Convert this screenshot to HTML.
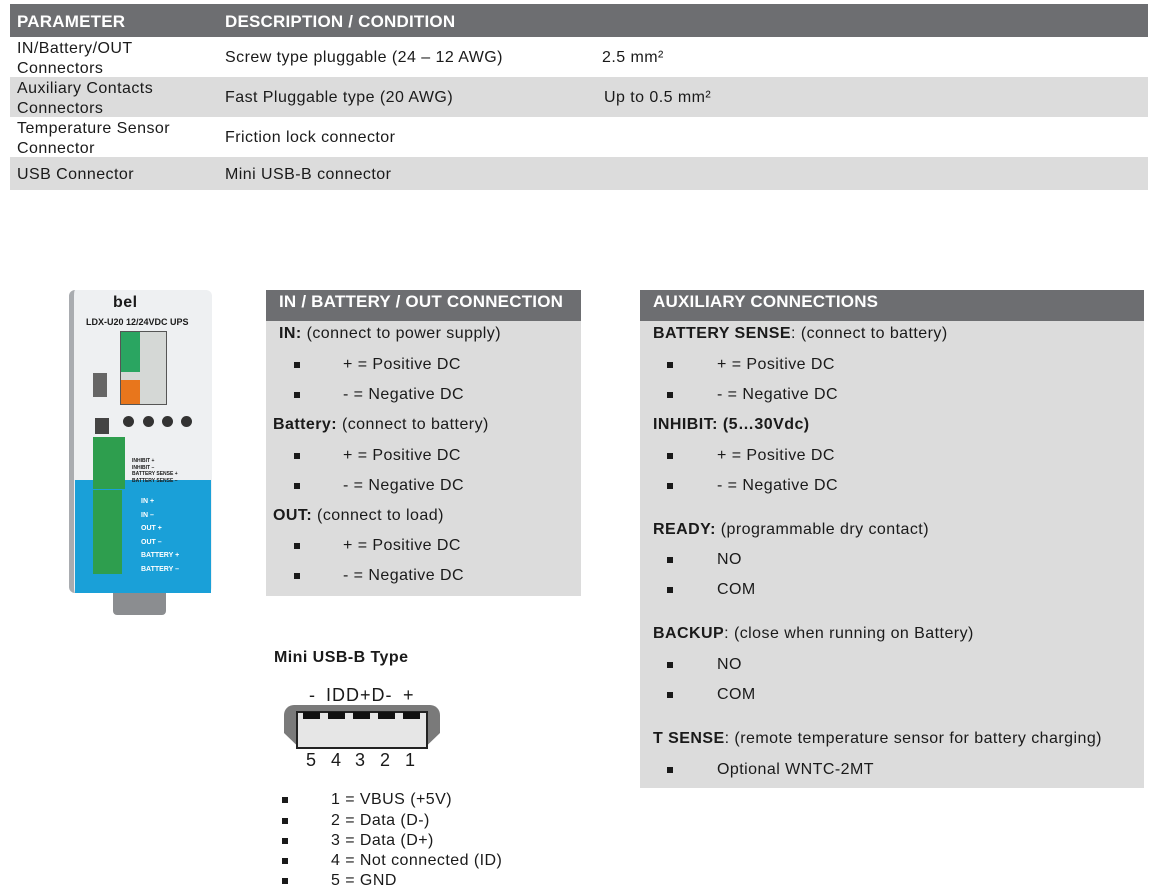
<!DOCTYPE html>
<html><head><meta charset="utf-8"><style>
*{margin:0;padding:0;box-sizing:border-box}
body{width:1153px;height:895px;background:#fff;font-family:"Liberation Sans",Arial,sans-serif;color:#1a1a1a;position:relative;overflow:hidden;font-size:16px;letter-spacing:0.45px}
.a{position:absolute;white-space:nowrap}
.hd{background:#6d6e71;color:#fff;font-weight:bold;font-size:16px}
.h{color:#fff;font-weight:bold;font-size:17px;letter-spacing:0.2px}
.g{background:#dcdcdc}
.b{position:absolute;width:6px;height:6px;background:#1a1a1a}
.d{font-size:18px;letter-spacing:0}
</style></head><body>
<!-- table -->
<div class="a hd" style="left:10px;top:4px;width:1138px;height:33px"></div>
<div class="a h" style="left:17px;top:12px">PARAMETER</div>
<div class="a h" style="left:225px;top:12px">DESCRIPTION / CONDITION</div>
<div class="a g" style="left:10px;top:77px;width:1138px;height:40px"></div>
<div class="a g" style="left:10px;top:157px;width:1138px;height:33px"></div>
<div class="a" style="left:17px;top:39px;line-height:20px">IN/Battery/OUT<br>Connectors</div>
<div class="a" style="left:225px;top:49px">Screw type pluggable (24 – 12 AWG)</div>
<div class="a" style="left:602px;top:49px">2.5 mm²</div>
<div class="a" style="left:17px;top:79px;line-height:20px">Auxiliary Contacts<br>Connectors</div>
<div class="a" style="left:225px;top:89px">Fast Pluggable type (20 AWG)</div>
<div class="a" style="left:604px;top:89px">Up to 0.5 mm²</div>
<div class="a" style="left:17px;top:119px;line-height:20px">Temperature Sensor<br>Connector</div>
<div class="a" style="left:225px;top:129px">Friction lock connector</div>
<div class="a" style="left:17px;top:166px">USB Connector</div>
<div class="a" style="left:225px;top:166px">Mini USB-B connector</div>

<!-- device -->
<div class="a" style="left:69px;top:290px;width:143px;height:303px;background:#eef0f2;border-radius:6px;border-left:5px solid #a9acb0"></div>
<div class="a" style="left:75px;top:480px;width:136px;height:113px;background:#1aa0d8"></div>
<div class="a" style="left:113px;top:294px;font-weight:bold;font-size:16px">bel</div>
<div class="a" style="left:86px;top:317px;font-weight:bold;font-size:9px;letter-spacing:0">LDX-U20 12/24VDC UPS</div>
<div class="a" style="left:120px;top:331px;width:47px;height:74px;background:#d5d8d6;border:1px solid #555"></div>
<div class="a" style="left:121px;top:332px;width:19px;height:40px;background:#2aa561"></div>
<div class="a" style="left:121px;top:380px;width:19px;height:24px;background:#e8761c"></div>
<div class="a" style="left:93px;top:373px;width:14px;height:24px;background:#666"></div>
<div class="a" style="left:95px;top:418px;width:14px;height:16px;background:#444"></div>
<div class="a" style="left:123px;top:416px;width:11px;height:11px;border-radius:50%;background:#333"></div>
<div class="a" style="left:143px;top:416px;width:11px;height:11px;border-radius:50%;background:#333"></div>
<div class="a" style="left:162px;top:416px;width:11px;height:11px;border-radius:50%;background:#333"></div>
<div class="a" style="left:181px;top:416px;width:11px;height:11px;border-radius:50%;background:#333"></div>
<div class="a" style="left:93px;top:437px;width:32px;height:52px;background:#2e9e4e"></div>
<div class="a" style="left:93px;top:490px;width:29px;height:84px;background:#2e9e4e"></div>
<div class="a" style="left:141px;top:495px;color:#fff;font-size:7px;font-weight:bold;line-height:13.5px;letter-spacing:0">IN +<br>IN –<br>OUT +<br>OUT –<br>BATTERY +<br>BATTERY –</div>
<div class="a" style="left:132px;top:458px;font-size:5px;font-weight:bold;line-height:6.5px;letter-spacing:0">INHIBIT +<br>INHIBIT –<br>BATTERY SENSE +<br>BATTERY SENSE –</div>
<div class="a" style="left:113px;top:593px;width:53px;height:22px;background:#8b8d90;border-radius:0 0 4px 4px"></div>

<!-- left panel -->
<div class="a g" style="left:266px;top:290px;width:315px;height:306px"></div>
<div class="a hd" style="left:266px;top:290px;width:315px;height:31px"></div>
<div class="a h" style="left:279px;top:292px">IN / BATTERY / OUT CONNECTION</div>
<div class="a" style="left:279px;top:325px"><b>IN:</b> (connect to power supply)</div>
<div class="b" style="left:294px;top:362px"></div><div class="a" style="left:343px;top:356px">+ = Positive DC</div>
<div class="b" style="left:294px;top:392px"></div><div class="a" style="left:343px;top:386px">- = Negative DC</div>
<div class="a" style="left:273px;top:416px"><b>Battery:</b> (connect to battery)</div>
<div class="b" style="left:294px;top:453px"></div><div class="a" style="left:343px;top:447px">+ = Positive DC</div>
<div class="b" style="left:294px;top:483px"></div><div class="a" style="left:343px;top:477px">- = Negative DC</div>
<div class="a" style="left:273px;top:507px"><b>OUT:</b> (connect to load)</div>
<div class="b" style="left:294px;top:543px"></div><div class="a" style="left:343px;top:537px">+ = Positive DC</div>
<div class="b" style="left:294px;top:573px"></div><div class="a" style="left:343px;top:567px">- = Negative DC</div>

<!-- right panel -->
<div class="a g" style="left:640px;top:290px;width:504px;height:498px"></div>
<div class="a hd" style="left:640px;top:290px;width:504px;height:31px"></div>
<div class="a h" style="left:653px;top:292px">AUXILIARY CONNECTIONS</div>
<div class="a" style="left:653px;top:325px"><b>BATTERY SENSE</b>: (connect to battery)</div>
<div class="b" style="left:667px;top:362px"></div><div class="a" style="left:717px;top:356px">+ = Positive DC</div>
<div class="b" style="left:667px;top:392px"></div><div class="a" style="left:717px;top:386px">- = Negative DC</div>
<div class="a" style="left:653px;top:416px"><b>INHIBIT: (5…30Vdc)</b></div>
<div class="b" style="left:667px;top:453px"></div><div class="a" style="left:717px;top:447px">+ = Positive DC</div>
<div class="b" style="left:667px;top:483px"></div><div class="a" style="left:717px;top:477px">- = Negative DC</div>
<div class="a" style="left:653px;top:521px"><b>READY:</b> (programmable dry contact)</div>
<div class="b" style="left:667px;top:557px"></div><div class="a" style="left:717px;top:551px">NO</div>
<div class="b" style="left:667px;top:587px"></div><div class="a" style="left:717px;top:581px">COM</div>
<div class="a" style="left:653px;top:625px"><b>BACKUP</b>: (close when running on Battery)</div>
<div class="b" style="left:667px;top:662px"></div><div class="a" style="left:717px;top:656px">NO</div>
<div class="b" style="left:667px;top:692px"></div><div class="a" style="left:717px;top:686px">COM</div>
<div class="a" style="left:653px;top:730px"><b>T SENSE</b>: (remote temperature sensor for battery charging)</div>
<div class="b" style="left:667px;top:767px"></div><div class="a" style="left:717px;top:761px">Optional WNTC-2MT</div>

<!-- usb -->
<div class="a" style="left:274px;top:649px;font-weight:bold">Mini USB-B Type</div>
<div class="a d" style="left:309px;top:685px">-</div>
<div class="a d" style="left:326px;top:685px;letter-spacing:1px">IDD+D-</div>
<div class="a d" style="left:403px;top:685px">+</div>
<div class="a" style="left:284px;top:705px;width:156px;height:40px;background:#7a7a7a;border-radius:10px 10px 0 0;clip-path:polygon(0 0,100% 0,100% 70%,92% 100%,8% 100%,0 70%)"></div>
<div class="a" style="left:296px;top:711px;width:132px;height:38px;background:#e6e6e6;border:2px solid #222"></div>
<div class="a" style="left:303px;top:712px;width:17px;height:7px;background:#111"></div>
<div class="a" style="left:328px;top:712px;width:17px;height:7px;background:#111"></div>
<div class="a" style="left:353px;top:712px;width:17px;height:7px;background:#111"></div>
<div class="a" style="left:378px;top:712px;width:17px;height:7px;background:#111"></div>
<div class="a" style="left:403px;top:712px;width:17px;height:7px;background:#111"></div>
<div class="a d" style="left:306px;top:750px">5</div>
<div class="a d" style="left:331px;top:750px">4</div>
<div class="a d" style="left:355px;top:750px">3</div>
<div class="a d" style="left:380px;top:750px">2</div>
<div class="a d" style="left:405px;top:750px">1</div>
<div class="b" style="left:282px;top:797px"></div><div class="a" style="left:331px;top:791px">1 = VBUS (+5V)</div>
<div class="b" style="left:282px;top:818px"></div><div class="a" style="left:331px;top:812px">2 = Data (D-)</div>
<div class="b" style="left:282px;top:838px"></div><div class="a" style="left:331px;top:832px">3 = Data (D+)</div>
<div class="b" style="left:282px;top:858px"></div><div class="a" style="left:331px;top:852px">4 = Not connected (ID)</div>
<div class="b" style="left:282px;top:878px"></div><div class="a" style="left:331px;top:872px">5 = GND</div>
</body></html>
